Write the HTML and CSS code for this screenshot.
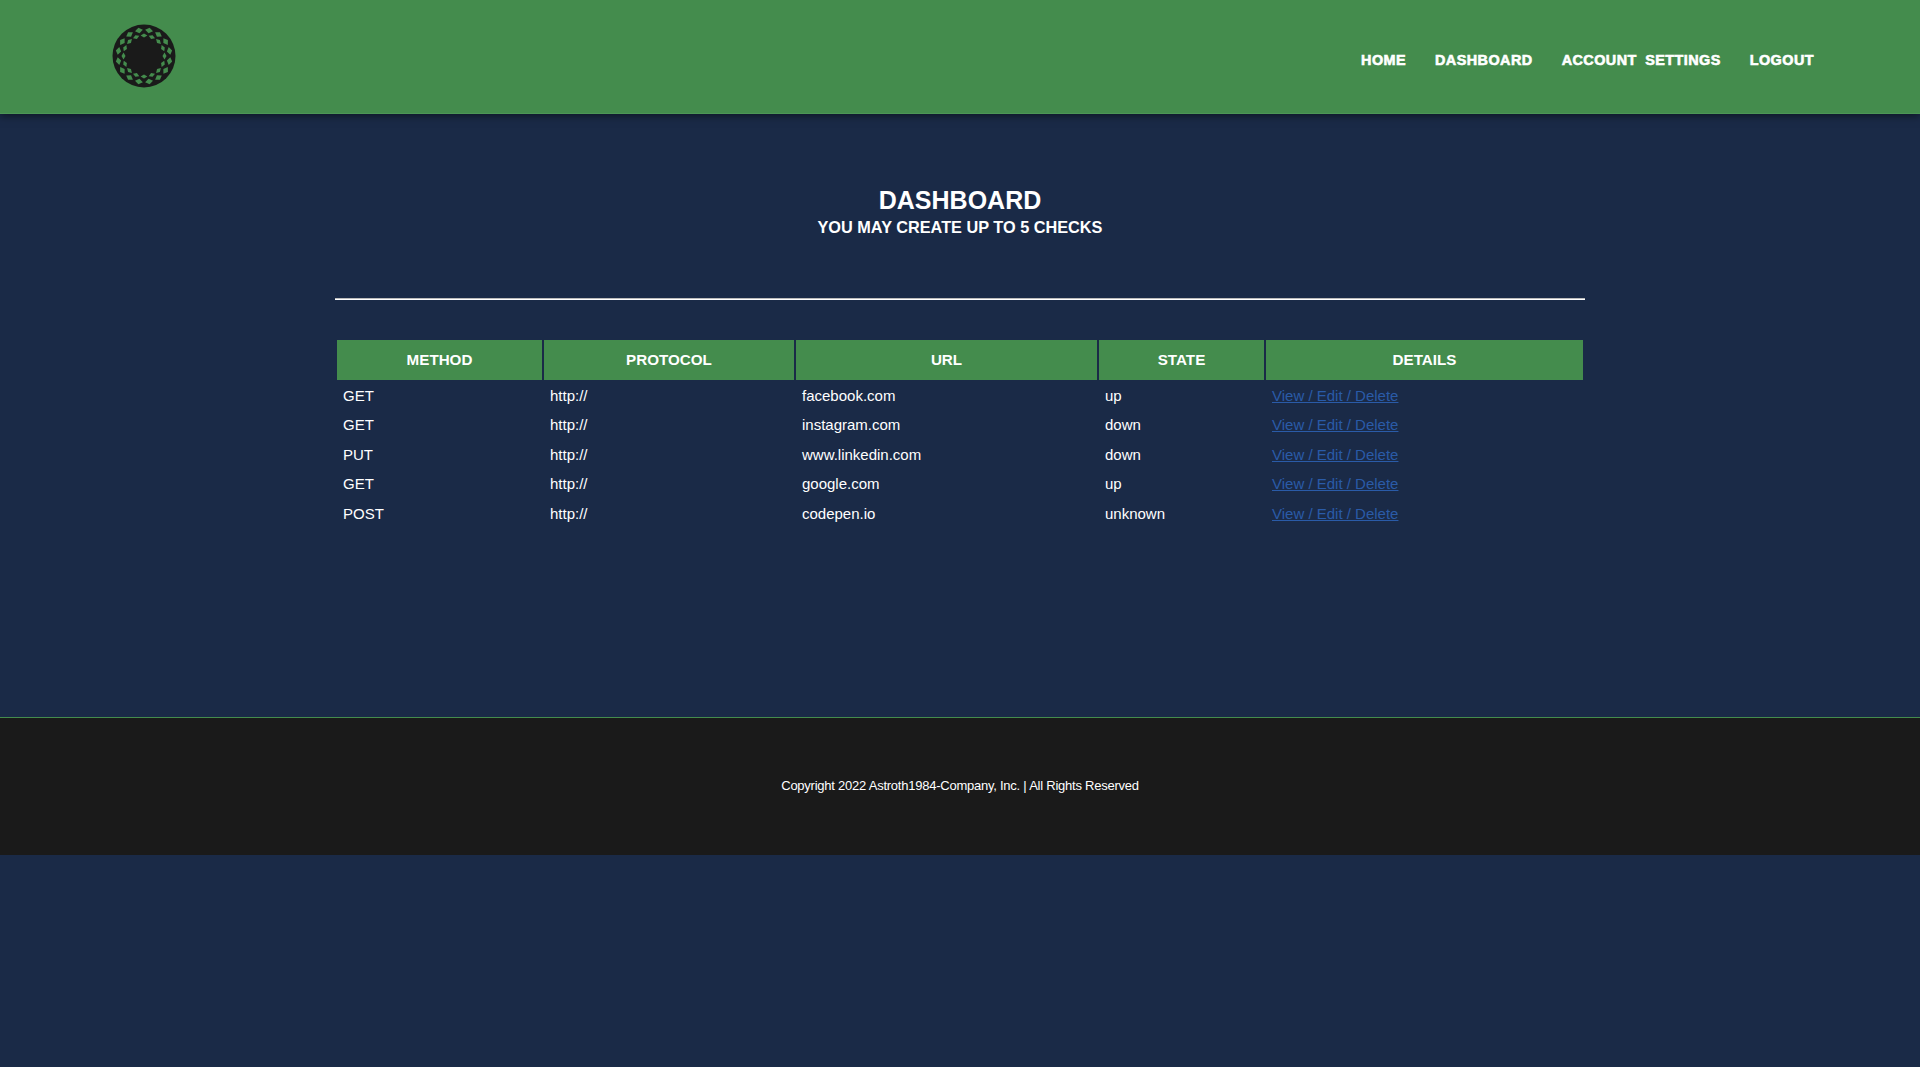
FILE: index.html
```html
<!doctype html>
<html lang="en">
<head>
    <meta charset="UTF-8">
    <meta name="viewport" content="width=device-width, initial-scale=1.0">
    <title>Dashboard</title>
    <link rel="stylesheet" href="styles.css">
</head>
<body>
    <header class="site-header">
        <a class="logo" href="#">
            <svg width="64" height="64" viewBox="-32 -32 64 64">
                <defs>
                    <path id="gem" d="M0 -2.7 L4 0 L0 2.7 L-4 0 Z"/>
                    <path id="gem-small" d="M0 -2 L3.4 0 L0 2 L-3.4 0 Z"/>
                </defs>
                <circle r="31.5" fill="#1a1a1a"/>
                <g fill="#448c4d">
                    <use href="#gem" y="-26" transform="rotate(11.25)"/>
                    <use href="#gem" y="-26" transform="rotate(33.75)"/>
                    <use href="#gem" y="-26" transform="rotate(56.25)"/>
                    <use href="#gem" y="-26" transform="rotate(78.75)"/>
                    <use href="#gem" y="-26" transform="rotate(101.25)"/>
                    <use href="#gem" y="-26" transform="rotate(123.75)"/>
                    <use href="#gem" y="-26" transform="rotate(146.25)"/>
                    <use href="#gem" y="-26" transform="rotate(168.75)"/>
                    <use href="#gem" y="-26" transform="rotate(191.25)"/>
                    <use href="#gem" y="-26" transform="rotate(213.75)"/>
                    <use href="#gem" y="-26" transform="rotate(236.25)"/>
                    <use href="#gem" y="-26" transform="rotate(258.75)"/>
                    <use href="#gem" y="-26" transform="rotate(281.25)"/>
                    <use href="#gem" y="-26" transform="rotate(303.75)"/>
                    <use href="#gem" y="-26" transform="rotate(326.25)"/>
                    <use href="#gem" y="-26" transform="rotate(348.75)"/>
                    <use href="#gem-small" y="-20.5"/>
                    <use href="#gem-small" y="-20.5" transform="rotate(22.5)"/>
                    <use href="#gem-small" y="-20.5" transform="rotate(45)"/>
                    <use href="#gem-small" y="-20.5" transform="rotate(67.5)"/>
                    <use href="#gem-small" y="-20.5" transform="rotate(90)"/>
                    <use href="#gem-small" y="-20.5" transform="rotate(112.5)"/>
                    <use href="#gem-small" y="-20.5" transform="rotate(135)"/>
                    <use href="#gem-small" y="-20.5" transform="rotate(157.5)"/>
                    <use href="#gem-small" y="-20.5" transform="rotate(180)"/>
                    <use href="#gem-small" y="-20.5" transform="rotate(202.5)"/>
                    <use href="#gem-small" y="-20.5" transform="rotate(225)"/>
                    <use href="#gem-small" y="-20.5" transform="rotate(247.5)"/>
                    <use href="#gem-small" y="-20.5" transform="rotate(270)"/>
                    <use href="#gem-small" y="-20.5" transform="rotate(292.5)"/>
                    <use href="#gem-small" y="-20.5" transform="rotate(315)"/>
                    <use href="#gem-small" y="-20.5" transform="rotate(337.5)"/>
                </g>
                <circle r="17.5" fill="#1a1a1a"/>
            </svg>
        </a>
        <nav class="nav-links">
            <a href="#">HOME</a>
            <a href="#">DASHBOARD</a>
            <a href="#">ACCOUNT SETTINGS</a>
            <a href="#">LOGOUT</a>
        </nav>
    </header>

    <main class="content">
        <div class="page-title">
            <h1>DASHBOARD</h1>
            <h2>YOU MAY CREATE UP TO 5 CHECKS</h2>
        </div>
        <hr class="divider">
        <table class="checks">
            <colgroup>
                <col class="col-method">
                <col class="col-protocol">
                <col class="col-url">
                <col class="col-state">
                <col class="col-details">
            </colgroup>
            <thead>
                <tr>
                    <th>METHOD</th>
                    <th>PROTOCOL</th>
                    <th>URL</th>
                    <th>STATE</th>
                    <th>DETAILS</th>
                </tr>
            </thead>
            <tbody>
                <tr>
                    <td>GET</td>
                    <td>http://</td>
                    <td>facebook.com</td>
                    <td>up</td>
                    <td><a href="#">View / Edit / Delete</a></td>
                </tr>
                <tr>
                    <td>GET</td>
                    <td>http://</td>
                    <td>instagram.com</td>
                    <td>down</td>
                    <td><a href="#">View / Edit / Delete</a></td>
                </tr>
                <tr>
                    <td>PUT</td>
                    <td>http://</td>
                    <td>www.linkedin.com</td>
                    <td>down</td>
                    <td><a href="#">View / Edit / Delete</a></td>
                </tr>
                <tr>
                    <td>GET</td>
                    <td>http://</td>
                    <td>google.com</td>
                    <td>up</td>
                    <td><a href="#">View / Edit / Delete</a></td>
                </tr>
                <tr>
                    <td>POST</td>
                    <td>http://</td>
                    <td>codepen.io</td>
                    <td>unknown</td>
                    <td><a href="#">View / Edit / Delete</a></td>
                </tr>
            </tbody>
        </table>
    </main>

    <footer class="site-footer">
        <p>Copyright 2022 Astroth1984-Company, Inc. | All Rights Reserved</p>
    </footer>
</body>
</html>
```

FILE: styles.css
```css
body {
    margin: 0;
    background-color: #1a2a47;
    color: #fff;
    font-family: "Liberation Sans", Arial, sans-serif;
}

.site-header {
    height: 114px;
    box-sizing: border-box;
    padding: 0 106px 2px 112px;
    display: flex;
    justify-content: space-between;
    align-items: center;
    background-color: #448c4d;
    border-bottom: 1px solid #4d9656;
    box-shadow: 0 2px 8px rgba(0, 0, 0, 0.5);
}

.logo {
    display: block;
    height: 64px;
}

.nav-links {
    display: flex;
    gap: 29px;
    padding-top: 8px;
}

.nav-links a {
    color: #fff;
    font-size: 14.4px;
    font-weight: bold;
    letter-spacing: 0.45px;
    word-spacing: 4px;
    text-decoration: none;
    -webkit-text-stroke: 0.6px #fff;
}

.content {
    width: 1250px;
    height: 603px;
    margin: 0 auto;
    padding-top: 72px;
    box-sizing: border-box;
}

.page-title {
    text-align: center;
}

.page-title h1 {
    margin: 0;
    font-size: 25px;
    line-height: 29px;
}

.page-title h2 {
    margin: 0;
    font-size: 16.3px;
    line-height: 25px;
}

.divider {
    margin: 58px 0 0;
    border: none;
    border-top: 1px solid #bbb;
    border-bottom: 1px solid #fff;
}

.checks {
    width: 100%;
    margin-top: 38px;
    table-layout: fixed;
    border-collapse: separate;
    border-spacing: 2px;
    font-size: 15px;
}

.col-method { width: 205px; }
.col-protocol { width: 250px; }
.col-url { width: 301px; }
.col-state { width: 165px; }

.checks th {
    height: 39.6px;
    box-sizing: border-box;
    padding: 0 6px 1px;
    background-color: #448c4d;
    font-size: 15.2px;
}

.checks td {
    padding: 5px 6px;
    line-height: 17.5px;
}

.checks a {
    color: #2a5ba8;
}

.site-footer {
    height: 138px;
    box-sizing: border-box;
    padding-bottom: 3px;
    display: flex;
    align-items: center;
    justify-content: center;
    background-color: #1a1a1a;
    border-top: 1px solid #448c4d;
}

.site-footer p {
    margin: 0;
    font-size: 13px;
    letter-spacing: -0.24px;
}
```
